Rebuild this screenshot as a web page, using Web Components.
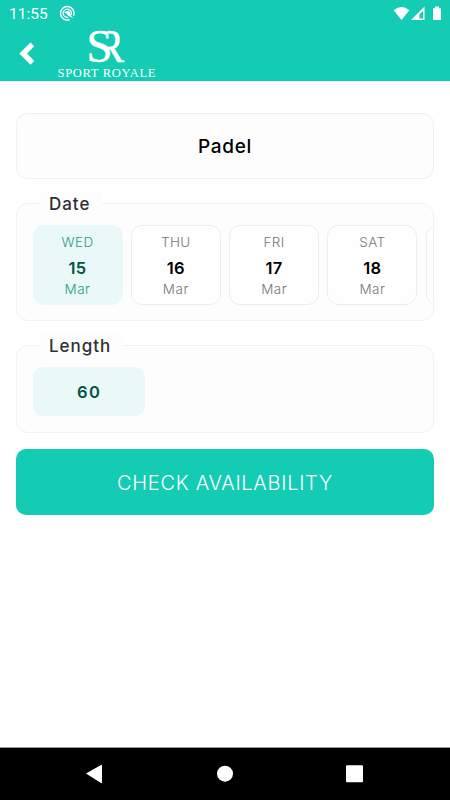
<!DOCTYPE html>
<html lang="en">
<head>
<meta charset="UTF-8">
<meta name="viewport" content="width=device-width, initial-scale=1.0">
<title>Sport Royale</title>
<style>
    body {
        margin: 0;
        height: 100vh;
        overflow: hidden;
        background: #fff;
        font-family: Inter, "Open Sans", sans-serif;
    }
</style>
</head>
<body>
<booking-app>
    <app-header slot="header"></app-header>
    <sport-card>Padel</sport-card>
    <field-group label="Date" style="--height: 118px; --legend: 63px">
        <day-card selected day="WED" date="15" month="Mar"></day-card>
        <day-card day="THU" date="16" month="Mar"></day-card>
        <day-card day="FRI" date="17" month="Mar"></day-card>
        <day-card day="SAT" date="18" month="Mar"></day-card>
        <day-card></day-card>
    </field-group>
    <field-group label="Length" style="--height: 88px; --legend: 84px">
        <length-option>60</length-option>
    </field-group>
    <primary-button>CHECK AVAILABILITY</primary-button>
    <nav-bar slot="footer"></nav-bar>
</booking-app>

<script>
class BookingApp extends HTMLElement {
    connectedCallback() {
        this.attachShadow({ mode: 'open' });
        this.shadowRoot.innerHTML = `
            <style>
                :host { display: flex; flex-direction: column; height: 100vh; }
                main {
                    flex: 1;
                    display: flex;
                    flex-direction: column;
                    padding: 32px 16px 0;
                }
            </style>
            <slot name="header"></slot>
            <main><slot></slot></main>
            <slot name="footer"></slot>
        `;
    }
}

class AppHeader extends HTMLElement {
    connectedCallback() {
        this.attachShadow({ mode: 'open' });
        this.shadowRoot.innerHTML = `
            <style>
                :host {
                    display: flex;
                    flex-direction: column;
                    height: 81px;
                    background: #14cbb4;
                    color: #fff;
                }
                .status {
                    display: flex;
                    align-items: center;
                    height: 27px;
                    padding: 0 7px 0 9px;
                    font: 15.5px/28px Roboto, sans-serif;
                }
                .status span { width: 50px; }
                .status .signals { margin-left: auto; }
                .bar { display: flex; height: 54px; }
                svg { display: block; overflow: visible; }
            </style>
            <div class="status">
                <span>11:55</span>
                <svg width="17" height="17" viewBox="0 0 17 17" fill="none" stroke="#fff">
                    <path d="M14.6 10.8A6.800 6.800 0 1 0 10.800 14.600" stroke-width="1.5"/>
                    <path d="M5 10.800A4.100 4.100 0 1 1 12 10M5.200 10.800a4.200 4.200 0 0 0 4 1.500" stroke-width="1.2"/>
                    <path d="M5 7.800Q8 4.500 11 7l.5 2.800 2.800 3.700-5.300-3Q8 7.800 5 7.800z" fill="#fff" stroke="none"/>
                </svg>
                <svg class="signals" width="50" height="20" viewBox="0 0 50 20" fill="#fff">
                    <path d="M.7 6.2Q8.5-.1 16.3 6.2L8.5 16z"/>
                    <path d="M18 16 31.500 2.500V16zM26.500 14.500h3.500V6.800l-3.500 3.500z" fill-rule="evenodd"/>
                    <path d="M40 4.200h2V2.500h4v1.700h2V16h-8z"/>
                </svg>
            </div>
            <div class="bar">
                <svg width="160" height="54" viewBox="0 27 160 54" fill="#fff">
                    <!-- the R's stem is hidden so that its bowl grows out of the S -->
                    <clipPath id="bowl"><path d="M108 25h22v42h-16l-6-19z"/></clipPath>
                    <path d="M30.500 42.500 34.300 46.200 27 53.600 34.300 61 30.500 64.700 19.300 53.600z"/>
                    <g font-family="Liberation Serif, serif">
                        <g stroke="#fff" stroke-width=".5" font-size="46">
                            <text x="86.500" y="61.500" textLength="26" lengthAdjust="spacingAndGlyphs">S</text>
                            <g clip-path="url(#bowl)">
                                <text x="97" y="61.500" textLength="27" lengthAdjust="spacingAndGlyphs">R</text>
                            </g>
                        </g>
                        <text x="57.500" y="77" font-size="12.500" textLength="98">SPORT ROYALE</text>
                    </g>
                </svg>
            </div>
        `;
    }
}

class SportCard extends HTMLElement {
    connectedCallback() {
        this.attachShadow({ mode: 'open' });
        this.shadowRoot.innerHTML = `
            <style>
                :host {
                    display: flex;
                    align-items: center;
                    justify-content: center;
                    box-sizing: border-box;
                    height: 66px;
                    border: 1px solid #f0f0f0;
                    border-radius: 11px;
                    background: #fdfdfd;
                    color: #000;
                    font-size: 19px;
                    font-weight: 500;
                    letter-spacing: 0.7px;
                }
            </style>
            <slot></slot>
        `;
    }
}

// Outlined box whose label interrupts the top border
class FieldGroup extends HTMLElement {
    connectedCallback() {
        this.attachShadow({ mode: 'open' });
        this.shadowRoot.innerHTML = `
            <style>
                :host {
                    display: block;
                    position: relative;
                    box-sizing: border-box;
                    height: var(--height);
                    margin-top: 24px;
                    border: 1px solid #f1f1f1;
                    border-radius: 12px;
                    background: #fdfdfd;
                }
                .legend {
                    position: absolute;
                    top: -12px;
                    left: 22px;
                    width: var(--legend);
                    box-sizing: border-box;
                    padding-left: 10px;
                    background: #fdfdfd;
                    color: #303030;
                    font-size: 17px;
                    font-weight: 500;
                    line-height: 24px;
                    letter-spacing: 0.95px;
                }
                .items {
                    display: flex;
                    gap: 8.300px;
                    padding: 21px 0 0 15.500px;
                    overflow: hidden;
                }
            </style>
            <div class="legend">${this.getAttribute('label')}</div>
            <div class="items"><slot></slot></div>
        `;
    }
}

class DayCard extends HTMLElement {
    connectedCallback() {
        const text = name => this.getAttribute(name) || '';
        this.attachShadow({ mode: 'open' });
        this.shadowRoot.innerHTML = `
            <style>
                :host {
                    display: flex;
                    flex: 0 0 90px;
                    flex-direction: column;
                    align-items: center;
                    box-sizing: border-box;
                    height: 80px;
                    padding-top: 6px;
                    border: 1px solid #ededed;
                    border-radius: 11px;
                    background: #fefefe;
                    color: #777;
                    font-size: 13.500px;
                    font-weight: 300;
                    line-height: 20px;
                }
                .day { letter-spacing: 0.4px; }
                b { color: #000; font-size: 16.500px; font-weight: 600; line-height: 32px; letter-spacing: 0.3px; }
                .month { line-height: 10px; letter-spacing: 0.5px; }
                :host([selected]) { background: #eaf9f7; border-color: #eaf9f7; color: #279b86; }
                :host([selected]) b { color: #00563f; }
            </style>
            <span class="day">${text('day')}</span>
            <b>${text('date')}</b>
            <span class="month">${text('month')}</span>
        `;
    }
}

class LengthOption extends HTMLElement {
    connectedCallback() {
        this.attachShadow({ mode: 'open' });
        this.shadowRoot.innerHTML = `
            <style>
                :host {
                    display: flex;
                    align-items: center;
                    justify-content: center;
                    box-sizing: border-box;
                    width: 112.500px;
                    height: 49px;
                    padding: 1px 0 0 1px;
                    border-radius: 10px;
                    background: #eaf9f7;
                    color: #00563f;
                    font-size: 16.500px;
                    font-weight: 600;
                    letter-spacing: 1.5px;
                }
            </style>
            <slot></slot>
        `;
    }
}

class PrimaryButton extends HTMLElement {
    connectedCallback() {
        this.attachShadow({ mode: 'open' });
        this.shadowRoot.innerHTML = `
            <style>
                :host {
                    display: flex;
                    align-items: center;
                    justify-content: center;
                    box-sizing: border-box;
                    height: 66px;
                    margin-top: 16px;
                    padding-top: 1px;
                    border-radius: 10px;
                    background: #14cbb4;
                    color: #fff;
                    font-size: 20px;
                    font-weight: 300;
                    letter-spacing: 0.7px;
                }
            </style>
            <slot></slot>
        `;
    }
}

class NavBar extends HTMLElement {
    connectedCallback() {
        this.attachShadow({ mode: 'open' });
        this.shadowRoot.innerHTML = `
            <style>
                :host { display: block; height: 52px; background: #000; border-top: 1px solid #999; }
                svg { display: block; }
            </style>
            <svg width="450" height="52" viewBox="0 748 450 52" fill="#fff">
                <path d="M86 773.500 101 765q1-.5 1 .5v17q0 1-1 .5z"/>
                <circle cx="225" cy="773.700" r="8"/>
                <rect x="346" y="765.300" width="17" height="17" rx="1"/>
            </svg>
        `;
    }
}

customElements.define('booking-app', BookingApp);
customElements.define('app-header', AppHeader);
customElements.define('sport-card', SportCard);
customElements.define('field-group', FieldGroup);
customElements.define('day-card', DayCard);
customElements.define('length-option', LengthOption);
customElements.define('primary-button', PrimaryButton);
customElements.define('nav-bar', NavBar);
</script>
</body>
</html>
